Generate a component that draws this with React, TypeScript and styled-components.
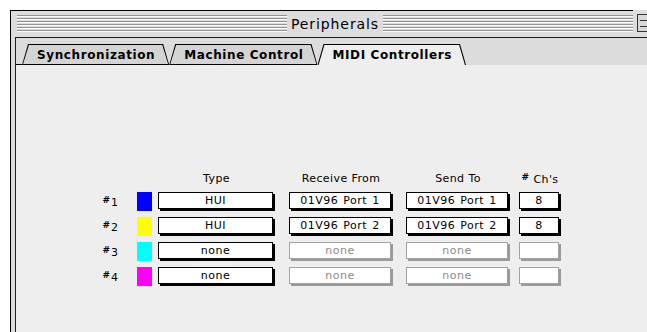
import React from "react";
import styled, { createGlobalStyle } from "styled-components";

const GlobalStyle = createGlobalStyle`
  html, body {
    margin: 0;
    padding: 0;
    background: #ffffff;
    overflow: hidden;
  }
  body {
    font-family: "DejaVu Sans", "Liberation Sans", sans-serif;
  }
`;

interface IRow {
  num: number;
  color: string;
  type: string;
  receive: string;
  send: string;
  channels: string;
  enabled: boolean;
}

const rows: IRow[] = [
  { num: 1, color: "#0000ff", type: "HUI", receive: "01V96 Port 1", send: "01V96 Port 1", channels: "8", enabled: true },
  { num: 2, color: "#ffff00", type: "HUI", receive: "01V96 Port 2", send: "01V96 Port 2", channels: "8", enabled: true },
  { num: 3, color: "#00ffff", type: "none", receive: "none", send: "none", channels: "", enabled: false },
  { num: 4, color: "#ff00ff", type: "none", receive: "none", send: "none", channels: "", enabled: false },
];

const tabs = ["Synchronization", "Machine Control", "MIDI Controllers"];

const Page = styled.div`
  width: 647px;
  height: 332px;
  padding: 10px 0 0 10px;
  box-sizing: border-box;
  overflow: hidden;
`;

const Window = styled.div`
  width: 650px;
  height: 340px;
  box-sizing: border-box;
  border: 1px solid #000;
  border-bottom: none;
  background: #dddddd;
  display: flex;
  flex-direction: column;
`;

const TitleBar = styled.div`
  position: relative;
  height: 26px;
  flex-shrink: 0;
  padding: 0 6px;
  display: grid;
  grid-template-columns: 1fr auto 1fr;
  align-items: center;
  column-gap: 4px;
`;

const Stripes = styled.div`
  height: 18px;
  background: repeating-linear-gradient(
    to bottom,
    #939393 0 1px,
    #fbfbfb 1px 2px,
    #dddddd 2px 3px
  );
`;

const Title = styled.span`
  font-size: 14px;
  letter-spacing: 0.9px;
  color: #000;
  line-height: 18px;
`;

const ZoomBox = styled.div`
  position: absolute;
  right: 4px;
  top: 3px;
  width: 18px;
  height: 18px;
  box-sizing: border-box;
  border: 1px solid #333;
  background: #d8d8d8;
  box-shadow: 0 0 0 4px #dddddd;

  &::after {
    content: "";
    position: absolute;
    left: 2px;
    right: 2px;
    top: 5px;
    height: 5px;
    border-top: 1px solid #333;
    border-bottom: 1px solid #333;
  }
`;

const Frame = styled.div`
  flex: 1;
  display: flex;
  padding: 0 4px;
`;

const Panel = styled.div`
  flex: 1;
  display: flex;
  flex-direction: column;
  border-top: 1px solid #1e1e1e;
  border-left: 1px solid #1e1e1e;
  background: #dcdcdc;
`;

const TabRow = styled.div`
  height: 27px;
  flex-shrink: 0;
  display: flex;
  align-items: flex-end;
`;

const TabLead = styled.div`
  width: 6px;
  height: 1px;
  background: #000;
`;

const Tab = styled.div<{ $active?: boolean }>`
  position: relative;
  isolation: isolate;
  height: 21px;
  padding: 0 14px 0 15px;
  display: flex;
  align-items: center;
  font-size: 12px;
  font-weight: bold;
  letter-spacing: 0.6px;
  color: #000;
  white-space: nowrap;

  &::before {
    content: "";
    position: absolute;
    inset: 0;
    z-index: -1;
    background: #000;
    border-radius: 3px 3px 0 0;
    clip-path: polygon(0 100%, 6px 0, calc(100% - 6px) 0, 100% 100%);
  }

  &::after {
    content: "";
    position: absolute;
    inset: 1px 0 ${({ $active }) => ($active ? 0 : 1)}px 0;
    z-index: -1;
    background: ${({ $active }) => ($active ? "#eeeeee" : "#d4d4d4")};
    clip-path: polygon(1.1px 100%, 6.9px 0, calc(100% - 6.9px) 0, calc(100% - 1.1px) 100%);
  }
`;

const Content = styled.div`
  flex: 1;
  background: #eeeeee;
  padding: 106px 0 0 84px;
`;

const Grid = styled.div`
  display: grid;
  grid-template-columns: 37px 21px 131px 117px 113px 42px;
  grid-auto-rows: 19px;
  grid-template-rows: 15px;
  row-gap: 6px;
  align-items: center;
`;

const Header = styled.div<{ $width: number }>`
  width: ${({ $width }) => $width}px;
  text-align: center;
  font-size: 11px;
  letter-spacing: 0.4px;
  color: #000;
  white-space: nowrap;
`;

const Hash = styled.span<{ $gap?: number }>`
  font-size: 9px;
  font-weight: bold;
  vertical-align: 3px;
  margin-right: ${({ $gap }) => $gap ?? 1}px;
`;

const RowLabel = styled.div`
  text-align: right;
  padding-right: 19px;
  font-size: 11px;
  color: #000;
`;

const Swatch = styled.div<{ $color: string }>`
  width: 15px;
  height: 19px;
  background: ${({ $color }) => $color};
`;

const Field = styled.div<{ $width: number; $enabled: boolean }>`
  width: ${({ $width }) => $width - 2}px;
  height: 17px;
  margin-bottom: 2px;
  box-sizing: border-box;
  background: #ffffff;
  border: 1px solid ${({ $enabled }) => ($enabled ? "#000" : "#a2a2a2")};
  box-shadow: ${({ $enabled }) => ($enabled ? "2px 2px 0 #000" : "2px 2px 0 #9a9a9a")};
  display: flex;
  align-items: center;
  justify-content: center;
  font-size: 11px;
  letter-spacing: 0.5px;
  word-spacing: 1px;
  color: ${({ $enabled }) => ($enabled ? "#000" : "#8a8a8a")};
  white-space: pre;
`;

const columns = [
  { key: "type", label: "Type", width: 117 },
  { key: "receive", label: "Receive From", width: 104 },
  { key: "send", label: "Send To", width: 104 },
  { key: "channels", label: "Ch's", width: 42 },
] as const;

const App: React.FC = () => (
  <Page>
    <GlobalStyle />
    <Window>
      <TitleBar>
        <Stripes />
        <Title>Peripherals</Title>
        <Stripes />
        <ZoomBox />
      </TitleBar>
      <Frame>
        <Panel>
          <TabRow>
            <TabLead />
            {tabs.map((t, i) => (
              <Tab key={t} $active={i === tabs.length - 1}>
                {t}
              </Tab>
            ))}
          </TabRow>
          <Content>
            <Grid>
              <div />
              <div />
              {columns.map((c) => (
                <Header key={c.key} $width={c.width}>
                  {c.key === "channels" && <Hash $gap={4}>#</Hash>}
                  {c.label}
                </Header>
              ))}
              {rows.map((r) => (
                <React.Fragment key={r.num}>
                  <RowLabel>
                    <Hash>#</Hash>
                    {r.num}
                  </RowLabel>
                  <Swatch $color={r.color} />
                  <Field $width={117} $enabled>
                    {r.type}
                  </Field>
                  <Field $width={104} $enabled={r.enabled}>
                    {r.receive}
                  </Field>
                  <Field $width={104} $enabled={r.enabled}>
                    {r.send}
                  </Field>
                  <Field $width={42} $enabled={r.enabled}>
                    {r.channels}
                  </Field>
                </React.Fragment>
              ))}
            </Grid>
          </Content>
        </Panel>
      </Frame>
    </Window>
  </Page>
);

export default App;
